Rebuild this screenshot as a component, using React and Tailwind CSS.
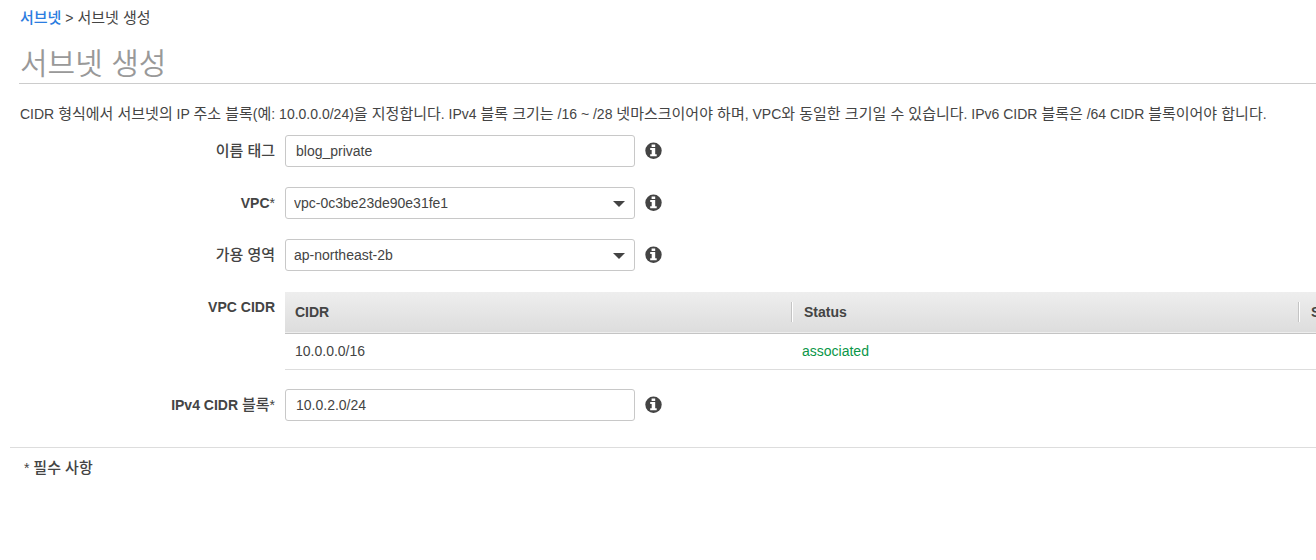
function InfoButton({ label }) {
  return (
    <button type="button" aria-label={label} className="ml-2.5 shrink-0 pb-px">
      <svg viewBox="0 0 17 17" aria-hidden="true" className="block size-[17px]">
        <circle cx="8.5" cy="8.7" r="8.2" fill="#444444" />
        <path
          d="M6.6 2.6h3.6v2.4H6.6zM5.2 6h5v6.3h1.5v2H5.2v-2h1.5V8H5.2z"
          fill="#ffffff"
        />
      </svg>
    </button>
  );
}

// Hangul is set one pixel larger than the Latin text beside it.
function Mixed({ children }) {
  return children
    .split(/([가-힣]+(?: [가-힣]+)*)/)
    .map((part, i) => (i % 2 ? <span key={i} className="text-[15px]">{part}</span> : part));
}

function Row({ label, id, required, children }) {
  return (
    <div className="flex items-start gap-2.5">
      <label htmlFor={id} className="w-[275px] shrink-0 pt-1.5 text-right leading-5 font-bold">
        {label}
        {required && <span className="font-normal">*</span>}
      </label>
      <div className="flex min-w-0 flex-1 items-center">{children}</div>
    </div>
  );
}

function Hangul({ children }) {
  return <span className="text-[15px] font-medium">{children}</span>;
}

function TextField({ id, value }) {
  return (
    <input
      id={id}
      type="text"
      defaultValue={value}
      className="h-8 w-[350px] rounded-[3px] border border-[#c8c8c8] bg-white px-2.5 outline-none"
    />
  );
}

function SelectField({ id, value }) {
  return (
    <div className="relative w-[350px]">
      <select
        id={id}
        defaultValue={value}
        className="block h-8 w-full appearance-none rounded-[3px] border border-[#c8c8c8] bg-white pr-8 pl-2 outline-none"
      >
        <option value={value}>{value}</option>
      </select>
      <svg
        viewBox="0 0 12 6"
        aria-hidden="true"
        className="pointer-events-none absolute top-3.5 right-2.5 h-1.5 w-3 fill-[#444444]"
      >
        <path d="M0 0h12L6 6z" />
      </svg>
    </div>
  );
}

function HeaderCell({ children, divided }) {
  return (
    <th scope="col" className="h-[41px] p-0 text-left font-bold">
      <div
        className={
          divided
            ? "-ml-px flex h-5 items-center border-l border-[#c4c4c4]"
            : "flex h-5 items-center pl-2.5"
        }
      >
        {divided && <span className="mr-[11px] h-5 w-px bg-white" />}
        {children}
      </div>
    </th>
  );
}

export default function App() {
  return (
    <main className="overflow-hidden bg-white pl-2.5 font-['Liberation_Sans','Noto_Sans_CJK_KR',sans-serif] text-[14px] leading-5 text-[#444444]">
      <nav aria-label="breadcrumb" className="px-2.5 pt-2">
        <a href="#subnets" className="text-[15px] font-medium text-[#2b7de0]">서브넷</a>
        {" > "}
        <span className="text-[15px]">서브넷 생성</span>
      </nav>

      <h1 className="mt-[17px] ml-[9px] border-b border-[#cccccc] pl-px text-[30px] leading-[38px] font-[350] text-[#999999]">
        서브넷 생성
      </h1>

      <p className="mt-5 pl-2.5 whitespace-nowrap">
        <Mixed>
          {"CIDR 형식에서 서브넷의 IP 주소 블록(예: 10.0.0.0/24)을 지정합니다. IPv4 블록 크기는 /16 ~ /28 넷마스크이어야 하며, VPC와 동일한 크기일 수 있습니다. IPv6 CIDR 블록은 /64 CIDR 블록이어야 합니다."}
        </Mixed>
      </p>

      <form className="mt-[11px] -ml-2.5 flex flex-col gap-5">
        <Row label={<Hangul>이름 태그</Hangul>} id="name-tag">
          <TextField id="name-tag" value="blog_private" />
          <InfoButton label="이름 태그" />
        </Row>
        <Row label="VPC" id="vpc" required>
          <SelectField id="vpc" value="vpc-0c3be23de90e31fe1" />
          <InfoButton label="VPC" />
        </Row>
        <Row label={<Hangul>가용 영역</Hangul>} id="zone">
          <SelectField id="zone" value="ap-northeast-2b" />
          <InfoButton label="가용 영역" />
        </Row>
        <div className="-mb-px flex items-start gap-2.5">
          <div id="vpc-cidr" className="w-[275px] shrink-0 pt-1.5 text-right font-bold">VPC CIDR</div>
          <div className="mt-px min-w-0 flex-1 overflow-hidden">
            <table aria-labelledby="vpc-cidr" className="w-[1521px] table-fixed border-collapse">
              <thead>
                <tr className="border-b border-[#c4c4c4] bg-linear-to-b from-[#eeeeee] to-[#dddddd]">
                  <HeaderCell>CIDR</HeaderCell>
                  <HeaderCell divided>Status</HeaderCell>
                  <HeaderCell divided>Status Reason</HeaderCell>
                </tr>
              </thead>
              <tbody>
                <tr className="border-b border-[#dddddd]">
                  <td className="h-9 p-0 pl-2.5">10.0.0.0/16</td>
                  <td className="p-0 pl-2.5 text-[#0a9648]">associated</td>
                  <td className="p-0" />
                </tr>
              </tbody>
            </table>
          </div>
        </div>
        <Row label={<>IPv4 CIDR <Hangul>블록</Hangul></>} id="ipv4-cidr" required>
          <TextField id="ipv4-cidr" value="10.0.2.0/24" />
          <InfoButton label="IPv4 CIDR 블록" />
        </Row>
      </form>

      <footer className="mt-[26px] border-t border-[#dddddd] pt-2.5 pl-3.5">
        * <Hangul>필수 사항</Hangul>
      </footer>
    </main>
  );
}
